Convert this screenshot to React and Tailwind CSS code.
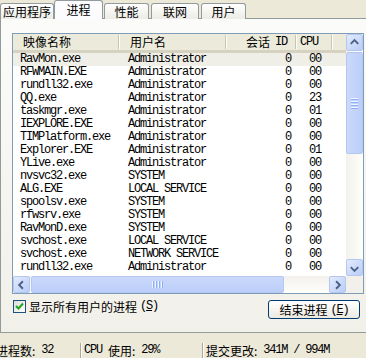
import React from "react";

const cjk = "font-['Noto_Sans_CJK_SC',sans-serif] text-[12px]";
const mono = "font-['Liberation_Mono',monospace] text-[12px] tracking-[-1.2px]";

const rows = [
  ["RavMon.exe", "Administrator", "0", "00"],
  ["RFWMAIN.EXE", "Administrator", "0", "00"],
  ["rundll32.exe", "Administrator", "0", "00"],
  ["QQ.exe", "Administrator", "0", "23"],
  ["taskmgr.exe", "Administrator", "0", "01"],
  ["IEXPLORE.EXE", "Administrator", "0", "00"],
  ["TIMPlatform.exe", "Administrator", "0", "00"],
  ["Explorer.EXE", "Administrator", "0", "01"],
  ["YLive.exe", "Administrator", "0", "00"],
  ["nvsvc32.exe", "SYSTEM", "0", "00"],
  ["ALG.EXE", "LOCAL SERVICE", "0", "00"],
  ["spoolsv.exe", "SYSTEM", "0", "00"],
  ["rfwsrv.exe", "SYSTEM", "0", "00"],
  ["RavMonD.exe", "SYSTEM", "0", "00"],
  ["svchost.exe", "LOCAL SERVICE", "0", "00"],
  ["svchost.exe", "NETWORK SERVICE", "0", "00"],
  ["rundll32.exe", "Administrator", "0", "00"],
];

const Arrow = ({ dir }) => {
  const d = {
    up: "M4 9 L8 5 L12 9",
    down: "M4 7 L8 11 L12 7",
    left: "M9.5 4 L5.5 8 L9.5 12",
    right: "M6.5 4 L10.5 8 L6.5 12",
  }[dir];
  return (
    <svg width="16" height="16" viewBox="0 0 16 16">
      <path d={d} fill="none" stroke="#4d6185" strokeWidth="2" />
    </svg>
  );
};

const ScrollBtn = ({ dir }) => (
  <div className="w-[17px] h-[17px] shrink-0 flex items-center justify-center rounded-[2px] border border-[#b4c7f1] bg-gradient-to-br from-[#e3ebfd] to-[#b9cdf8]">
    <Arrow dir={dir} />
  </div>
);

const Sep = () => (
  <div className="w-[2px] h-[14px] shrink-0 border-l border-[#c7c5b2] border-r border-r-white" />
);

const Tab = ({ label, active, className }) =>
  active ? (
    <div
      className={`h-[19px] relative z-10 flex items-start justify-center pt-[1px] border border-b-0 border-[#919b9c] rounded-t-[3px] bg-[#fcfcfe] ${className}`}
    >
      <span className={`${cjk} leading-[15px] text-black`}>{label}</span>
    </div>
  ) : (
    <div
      className={`h-[16px] flex items-center justify-center border border-b-0 border-[#919b9c] rounded-t-[3px] bg-gradient-to-b from-white to-[#ecebe5] ${className}`}
    >
      <span className={`${cjk} leading-[15px] text-black`}>{label}</span>
    </div>
  );

export default function App() {
  return (
    <div className="w-[366px] h-[358px] overflow-hidden bg-[#ece9d8] select-none">
      {/* Tabs */}
      <div className="flex items-end h-[19px]">
        <Tab label="应用程序" className="w-[54px]" />
        <Tab label="进程" active className="w-[49px]" />
        <Tab label="性能" className="w-[45px] ml-[1px]" />
        <Tab label="联网" className="w-[48px] ml-[2px]" />
        <Tab label="用户" className="w-[45px] ml-[2px]" />
      </div>

      {/* Panel */}
      <div className="-mt-px w-[370px] h-[315px] border border-[#919b9c] bg-gradient-to-b from-[#fbfbf9] to-[#f1f0e9] flex flex-col">
        {/* List view */}
        <div className="ml-[11px] mt-[14px] w-[352px] h-[261px] border border-[#7f9db9] bg-white flex flex-col">
          <div className="flex h-[242px]">
            <div className="w-[333px] flex flex-col">
              {/* Header */}
              <div className="flex h-[19px] bg-[#ebeadb] border-b-[3px] border-[#d6d2c2] text-black">
                <div className="w-[107px] flex items-center justify-between pl-[10px]">
                  <span className={`${cjk} leading-[14px]`}>映像名称</span>
                  <Sep />
                </div>
                <div className="w-[107px] flex items-center justify-between pl-[10px]">
                  <span className={`${cjk} leading-[14px]`}>用户名</span>
                  <Sep />
                </div>
                <div className="w-[70px] flex items-center justify-end">
                  <span className={`${cjk} leading-[14px]`}>会话</span>
                  <span className={`${mono} leading-[14px] ml-[5px] mr-[8px]`}>ID</span>
                  <Sep />
                </div>
                <div className="w-[36px] flex items-center justify-end">
                  <span className={`${mono} leading-[14px] mr-[13px]`}>CPU</span>
                  <Sep />
                </div>
                <div className="flex-1" />
              </div>
              {/* Rows */}
              {rows.map((r, i) => (
                <div
                  key={i}
                  className={`flex h-[13px] leading-[13px] text-black ${mono} ${i === 0 ? "bg-[#efeee7]" : ""}`}
                >
                  <div className="w-[107px] pl-[7px] whitespace-nowrap overflow-hidden">{r[0]}</div>
                  <div className="w-[107px] pl-[8px] whitespace-nowrap overflow-hidden">{r[1]}</div>
                  <div className="w-[70px] pr-[6px] text-right">{r[2]}</div>
                  <div className="w-[36px] pr-[12px] text-right">{r[3]}</div>
                  <div className="flex-1" />
                </div>
              ))}
            </div>
            {/* Vertical scrollbar */}
            <div className="w-[17px] flex flex-col bg-gradient-to-r from-[#f3f1ec] to-[#fefefb]">
              <ScrollBtn dir="up" />
              <div className="h-[102px] mt-[1px] rounded-[2px] border border-[#b4c7f1] bg-gradient-to-r from-[#cad9fb] to-[#bccefa] flex flex-col items-center justify-center gap-[1px]">
                {[0, 1, 2, 3].map((k) => (
                  <div key={k} className="w-[7px] h-[1px] bg-[#eef4fe] border-b border-[#8cb0f8] box-content" />
                ))}
              </div>
              <div className="flex-1" />
              <ScrollBtn dir="down" />
            </div>
          </div>
          {/* Horizontal scrollbar */}
          <div className="flex h-[17px] mt-auto">
            <div className="w-[333px] flex bg-gradient-to-b from-[#f3f1ec] to-[#fefefb]">
              <ScrollBtn dir="left" />
              <div className="w-[253px] ml-[1px] rounded-[2px] border border-[#b4c7f1] bg-gradient-to-b from-[#cad9fb] to-[#bccefa] flex items-center justify-center gap-[1px]">
                {[0, 1, 2, 3].map((k) => (
                  <div key={k} className="w-[1px] h-[7px] bg-[#eef4fe] border-r border-[#8cb0f8] box-content" />
                ))}
              </div>
              <div className="flex-1" />
              <ScrollBtn dir="right" />
            </div>
            <div className="w-[17px] bg-[#f1f0ea]" />
          </div>
        </div>

        {/* Checkbox + button */}
        <div className="flex items-start justify-between mt-[6px] w-[364px]">
          <div className="flex items-center ml-[12px]">
            <div className="w-[13px] h-[13px] border border-[#1c5180] bg-gradient-to-br from-[#dcdcd7] to-white flex items-center justify-center">
              <svg width="9" height="9" viewBox="0 0 9 9">
                <path d="M1 4 L3.5 6.5 L8 1.5" fill="none" stroke="#21a121" strokeWidth="2" />
              </svg>
            </div>
            <span className={`${cjk} ml-[3px] leading-[13px] text-black`}>显示所有用户的进程</span>
            <span className={`${mono} ml-[3px] leading-[13px] text-black`}>
              (<span className="underline">S</span>)
            </span>
          </div>
          <div className="w-[92px] h-[19px] mr-[5px] rounded-[3px] border border-[#003c74] bg-gradient-to-b from-white to-[#eceae0] flex items-center justify-center">
            <span className={`${cjk} leading-[14px] text-black`}>结束进程</span>
            <span className={`${mono} ml-[3px] leading-[14px] text-black`}>
              (<span className="underline">E</span>)
            </span>
          </div>
        </div>
      </div>

      {/* Status bar */}
      <div className="flex h-[25px] items-end text-black">
        <div className="w-[84px] flex items-end h-[16px] -ml-[4px] whitespace-nowrap">
          <span className={`${cjk} leading-[15px]`}>进程数:</span>
          <span className={`${mono} leading-[15px] ml-[6px]`}>32</span>
        </div>
        <div className="w-[2px] h-[15px] border-l border-[#aca899] border-r border-r-white" />
        <div className="w-[120px] flex items-end h-[16px] pl-[2px] whitespace-nowrap">
          <span className={`${mono} leading-[15px]`}>CPU</span>
          <span className={`${cjk} leading-[15px] ml-[6px]`}>使用:</span>
          <span className={`${mono} leading-[15px] ml-[6px]`}>29%</span>
        </div>
        <div className="w-[2px] h-[15px] border-l border-[#aca899] border-r border-r-white" />
        <div className="flex-1 flex items-end h-[16px] pl-[2px] whitespace-nowrap">
          <span className={`${cjk} leading-[15px]`}>提交更改:</span>
          <span className={`${mono} leading-[15px] ml-[6px]`}>341M / 994M</span>
        </div>
      </div>
    </div>
  );
}
